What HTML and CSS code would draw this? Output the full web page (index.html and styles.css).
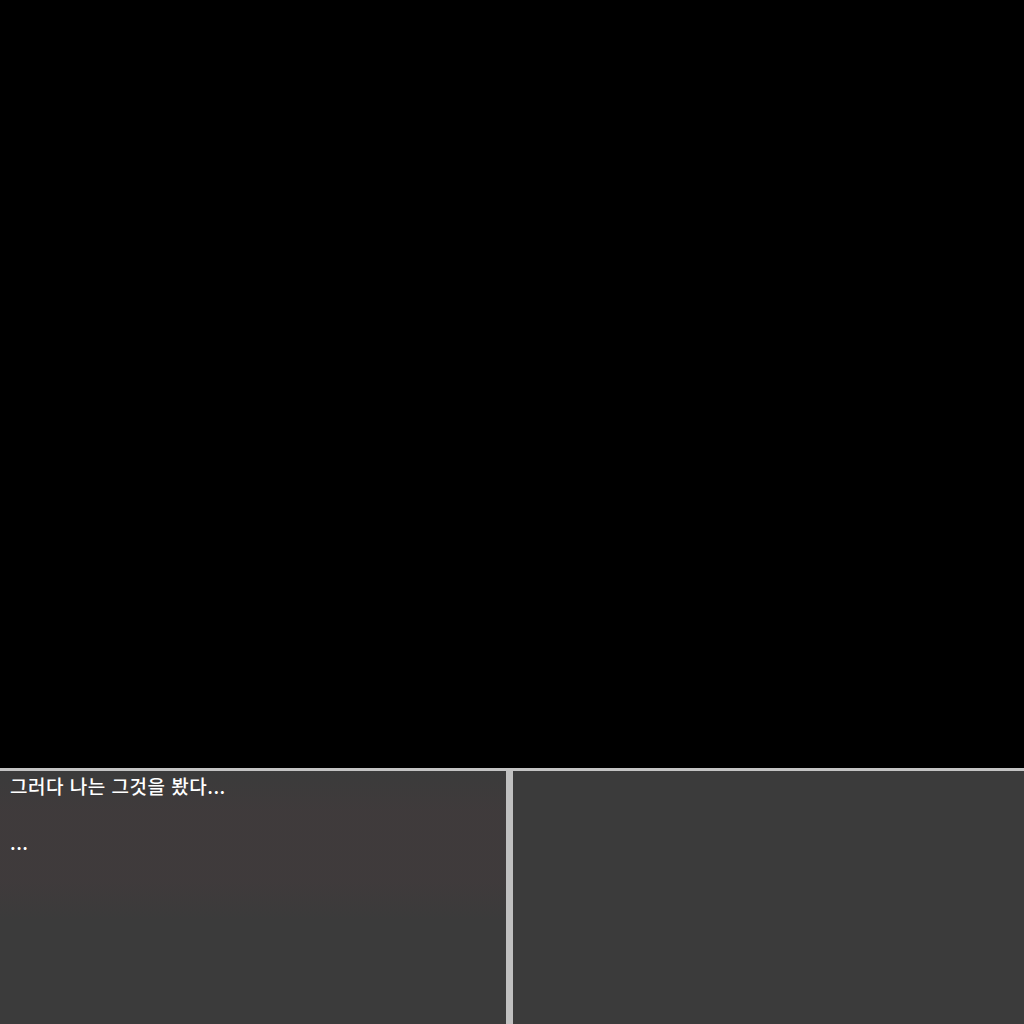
FILE: index.html
```html
<!DOCTYPE html>
<html lang="ko">
<head>
<meta charset="utf-8">
<link rel="stylesheet" href="styles.css">
</head>
<body>
<div class="screen">
  <div class="stage"></div>
  <div class="panels">
    <div class="panel left">
      <p class="line">그러다 나는 그것을 봤다...</p>
      <p class="line blank">&nbsp;</p>
      <p class="line">...</p>
    </div>
    <div class="divider"></div>
    <div class="panel right"></div>
  </div>
</div>
</body>
</html>
```

FILE: styles.css
```css
html, body {
  margin: 0;
  padding: 0;
  background: #000;
}
.screen {
  width: 1024px;
  height: 1024px;
  display: flex;
  flex-direction: column;
}
.stage {
  height: 768px;
  background: #000;
}
.panels {
  flex: 1;
  display: flex;
  border-top: 3px solid #c3c3c3;
}
.panel {
  background: #3b3b3b;
}
.left {
  width: 506px;
  padding: 1px 10px;
  box-sizing: border-box;
  background:
    linear-gradient(180deg, rgba(68,58,60,0) 0px, rgba(68,58,60,0.45) 40px, rgba(68,58,60,0.45) 110px, rgba(68,58,60,0) 150px),
    #3b3b3b;
}
.divider {
  width: 7px;
  background: #c0c0c0;
}
.right {
  flex: 1;
}
.line {
  margin: 0;
  color: #ffffff;
  font-family: "Noto Sans CJK KR", "Noto Sans", sans-serif;
  font-size: 19px;
  font-weight: 500;
  letter-spacing: 0.5px;
  line-height: 28px;
  white-space: pre;
}
```
